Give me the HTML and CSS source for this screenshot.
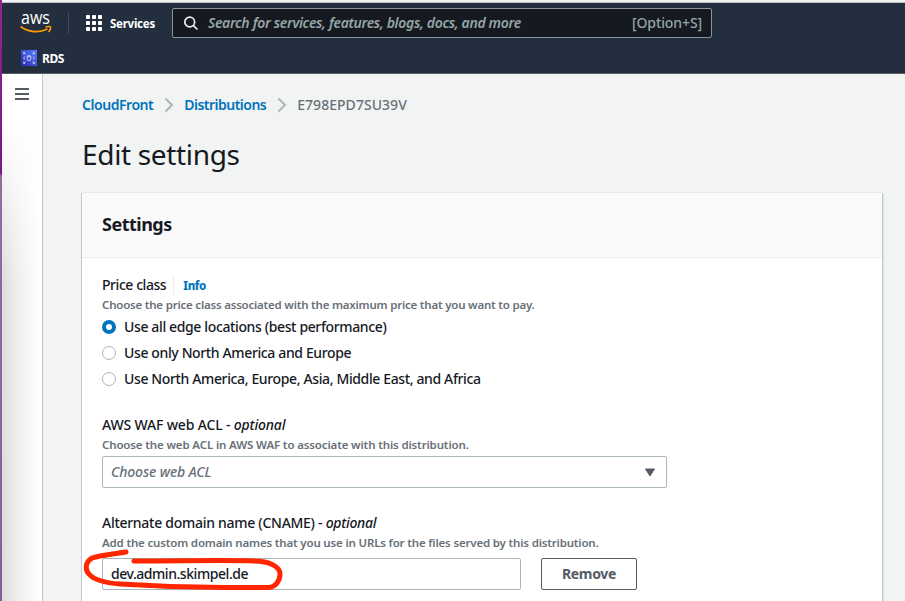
FILE: index.html
```html
<!DOCTYPE html>
<html lang="en">
<head>
<meta charset="utf-8">
<title>Edit settings</title>
<link rel="stylesheet" href="styles.css">
</head>
<body>
<div class="window">
  <div class="edge"></div>
  <div class="app">
    <header class="topbar">
      <div class="nav">
        <svg class="logo" width="34" height="34" viewBox="0 -5 34 34">
          <text class="logo-text" x="1" y="11.500" textLength="29" lengthAdjust="spacingAndGlyphs">aws</text>
          <path d="M.5 14.500C8 20.500 19 21 27.500 17" fill="none" stroke="#f90" stroke-width="1.900"/>
          <path d="M25.500 15.200C28.500 14 30.500 14.400 30.600 14.900C30.900 16.500 30 18.500 28.500 20" fill="none" stroke="#f90" stroke-width="1.500"/>
        </svg>
        <span class="divider"></span>
        <svg class="grid-icon" width="16" height="16" viewBox="0 0 16 16" fill="#fff">
          <rect width="4" height="4" rx=".7"/><rect x="6" width="4" height="4" rx=".7"/><rect x="12" width="4" height="4" rx=".7"/>
          <rect y="6" width="4" height="4" rx=".7"/><rect x="6" y="6" width="4" height="4" rx=".7"/><rect x="12" y="6" width="4" height="4" rx=".7"/>
          <rect y="12" width="4" height="4" rx=".7"/><rect x="6" y="12" width="4" height="4" rx=".7"/><rect x="12" y="12" width="4" height="4" rx=".7"/>
        </svg>
        <span class="services">Services</span>
        <div class="search">
          <svg width="15" height="15" viewBox="0 0 15 15" fill="none" stroke="#eaeded" stroke-width="1.700"><circle cx="5.700" cy="6" r="4.900"/><path d="M9.200 9.300L13.500 13.500"/></svg>
          <span class="search-hint">Search for services, features, blogs, docs, and more</span>
          <span class="shortcut">[Option+S]</span>
        </div>
      </div>
      <div class="favorites">
        <svg width="16" height="16" viewBox="0 0 16 16">
          <defs><linearGradient id="rds" x1="0" y1="1" x2="1" y2="0"><stop stop-color="#2e27ad"/><stop offset="1" stop-color="#527fff"/></linearGradient></defs>
          <rect width="16" height="16" fill="url(#rds)"/>
          <g fill="none" stroke="#dfe3ff" stroke-width=".8"><path d="M2.700 4.300V2.700h1.600M2.700 2.700l1.800 1.800M11.700 2.700h1.600v1.600M13.300 2.700l-1.800 1.800M2.700 11.700v1.600h1.600M2.700 13.300l1.800-1.800M11.700 13.300h1.600v-1.600M13.300 13.300l-1.800-1.800M3.700 6.500L2.700 8l1 1.500M12.300 6.500l1 1.500l-1 1.500"/><ellipse cx="8" cy="6.200" rx="1.800" ry=".6"/><path d="M6.200 6.200v3.600c0 .9 3.600 .9 3.600 0V6.200"/></g>
        </svg>
        <span class="rds">RDS</span>
      </div>
    </header>
    <div class="body">
      <aside class="side">
        <svg width="14" height="12" viewBox="0 0 14 12" fill="#545b64"><rect width="14" height="2"/><rect y="5" width="14" height="2"/><rect y="10" width="14" height="2"/></svg>
      </aside>
      <main class="main">
        <nav class="crumbs">
          <a class="crumb-a">CloudFront</a>
          <svg class="chev" width="10" height="16" viewBox="0 0 10 16"><path d="M1.500 1.500L8 8L1.500 14.500"/></svg>
          <a class="crumb-b">Distributions</a>
          <svg class="chev" width="10" height="16" viewBox="0 0 10 16"><path d="M1.500 1.500L8 8L1.500 14.500"/></svg>
          <span class="crumb-c">E798EPD7SU39V</span>
        </nav>
        <h1>Edit settings</h1>
        <section class="card">
          <div class="card-head"><h2>Settings</h2></div>
          <div class="card-body">
            <div class="field">
              <div class="label"><span class="l-price">Price class</span><a class="info">Info</a></div>
              <div class="desc d-price">Choose the price class associated with the maximum price that you want to pay.</div>
              <div class="radios">
                <label class="radio"><i class="dot on"></i><span>Use all edge locations (best performance)</span></label>
                <label class="radio"><i class="dot"></i><span>Use only North America and Europe</span></label>
                <label class="radio"><i class="dot"></i><span>Use North America, Europe, Asia, Middle East, and Africa</span></label>
              </div>
            </div>
            <div class="field">
              <div class="label"><span class="l-waf">AWS WAF web ACL - <em>optional</em></span></div>
              <div class="desc d-waf">Choose the web ACL in AWS WAF to associate with this distribution.</div>
              <div class="select"><span>Choose web ACL</span><svg width="12" height="9" viewBox="0 0 12 9"><path d="M1.500 1h9L6 8z" fill="#545b64" stroke="#545b64" stroke-linejoin="round"/></svg></div>
            </div>
            <div class="field">
              <div class="label"><span class="l-cname">Alternate domain name (CNAME) - <em>optional</em></span></div>
              <div class="desc">Add the custom domain names that you use in URLs for the files served by this distribution.</div>
              <div class="row">
                <div class="input"><span>dev.admin.skimpel.de</span>
                  <svg class="mark" width="210" height="50" viewBox="0 0 210 50" fill="none" stroke="#ff2600" stroke-width="5" stroke-linejoin="round"><path stroke-linecap="round" d="M46 7C33 9 21 10 12 13C5 17 5 25 9 29C14 35 25 38 40 39C70 41 100 42.500 145 42.500H188C196 42.500 200 35 200 29C200 22 190 16 174 16C150 15 100 16 54 16"/></svg>
                </div>
                <div class="remove"><span>Remove</span></div>
              </div>
            </div>
          </div>
        </section>
      </main>
    </div>
  </div>
</div>
</body>
</html>
```
FILE: styles.css
```css
* { box-sizing: border-box; }
body { margin: 0; background: #f3f2f5; font: 500 14px/22px "Noto Sans", "Open Sans", sans-serif; color: #16191f; }
span, a, h1, h2, .desc { white-space: nowrap; }
.window { display: flex; width: 905px; height: 601px; overflow: hidden; }
.edge { width: 2px; background: linear-gradient(#92278f 0, #7d128a 173px, #956ba0 176px, #80609a 100%); }
.app { flex: 1; display: flex; flex-direction: column; margin-top: 2px; border-top: 1px solid #bfbfc5; }
.topbar { height: 71px; flex: none; background: #232f3e; border-bottom: 1px solid #545b64; color: #fff; }
.nav { display: flex; align-items: center; height: 40px; padding-left: 18px; }
.logo { display: block; margin-top: 1px; }
.logo-text { font: 500 18px/1 "Open Sans", sans-serif; fill: #fff; }
.divider { width: 1px; height: 22px; margin: 0 17px 0 14px; background: #414d5c; }
.services { margin: 2px 0 0 8px; width: 62px; font-size: 11.5px; font-weight: 700; letter-spacing: -.25px; }
.search { display: flex; align-items: center; width: 540px; height: 30px; padding: 0 9px 0 11px; background: #16191f; border: 1px solid #879596; border-radius: 2px; color: #95a5a6; }
.search-hint { margin-left: 9px; font-style: italic; font-weight: 600; letter-spacing: -.34px; }
.shortcut { margin-left: auto; letter-spacing: -.1px; }
.favorites { display: flex; align-items: center; height: 30px; padding-left: 19px; }
.rds { margin: 2px 0 0 5px; font-size: 12px; font-weight: 700; letter-spacing: -.4px; }
.body { flex: 1; display: flex; min-height: 0; }
.side { width: 41px; flex: none; padding: 14px 0 0 13px; background: linear-gradient(#fff 45px, rgba(255, 255, 255, 0) 210px), linear-gradient(to right, #dcdcdc, #ededed 35%, #fcfcfc 85%, #fff); border-right: 1px solid #c3c7c8; }
.side svg { display: block; }
.main { flex: 1; padding: 20px 0 0 39px; background: #f2f3f3; overflow: hidden; }
.crumbs { display: flex; align-items: center; height: 22px; font-weight: 600; color: #0073bb; }
.crumb-a { letter-spacing: -.45px; }
.crumb-b { letter-spacing: -.52px; }
.chev { margin: 0 10px 0 11px; fill: none; stroke: #aab7b8; stroke-width: 2; }
.crumb-c { color: #687078; font-weight: 500; letter-spacing: .04px; }
h1 { margin: 20px 0 21px; font-size: 28px; line-height: 36px; font-weight: 400; letter-spacing: -.33px; }
.card { width: 800px; height: 440px; background: #fff; box-shadow: 0 -1px 0 #e8eaea, -1px 0 0 #c3cacb, 1px 0 0 #c3cacb, 2px 1px 1px #dfe2e2; }
.card-head { height: 65px; padding: 19px 20px; background: #fafafa; border-bottom: 1px solid #eaeded; }
h2 { margin: 0; font-size: 18px; line-height: 24px; font-weight: 700; letter-spacing: -.5px; }
.card-body { padding: 16px 20px; }
.field { margin-bottom: 24px; }
.label { display: flex; align-items: center; height: 22px; }
.l-price { letter-spacing: -.44px; }
.l-waf { letter-spacing: -.16px; }
.l-cname { letter-spacing: -.28px; }
.info { margin-left: 7px; padding: 1px 0 0 9px; border-left: 1px solid #eaeded; font-size: 11.5px; line-height: 18px; font-weight: 800; letter-spacing: -.35px; color: #0073bb; }
.desc { font-size: 11.5px; line-height: 18px; font-weight: 600; letter-spacing: -.17px; color: #687078; }
.d-price { letter-spacing: -.21px; }
.d-waf { letter-spacing: -.14px; }
.radios { display: grid; gap: 4px; padding-top: 2px; }
.radio { display: flex; align-items: center; height: 22px; letter-spacing: -.37px; }
.dot { width: 14px; height: 14px; margin-right: 8px; border: 1px solid #aab7b8; border-radius: 50%; background: #fff; }
.dot.on { border: 4px solid #0073bb; }
.select { display: flex; align-items: center; justify-content: space-between; width: 565px; height: 32px; margin-top: 2px; padding: 0 10px 0 8px; border: 1px solid #aab7b8; border-radius: 2px; color: #687078; font-style: italic; letter-spacing: -.13px; }
.row { display: flex; gap: 20px; margin-top: 6px; }
.input { position: relative; display: flex; align-items: center; width: 419px; height: 32px; padding-left: 8px; border: 1px solid #aab7b8; border-radius: 2px; letter-spacing: -.45px; }
.mark { position: absolute; left: -23px; top: -14px; }
.remove { display: flex; align-items: center; justify-content: center; width: 96px; height: 32px; border: 1px solid #545b64; border-radius: 2px; color: #545b64; font-weight: 700; letter-spacing: -.3px; }
```
